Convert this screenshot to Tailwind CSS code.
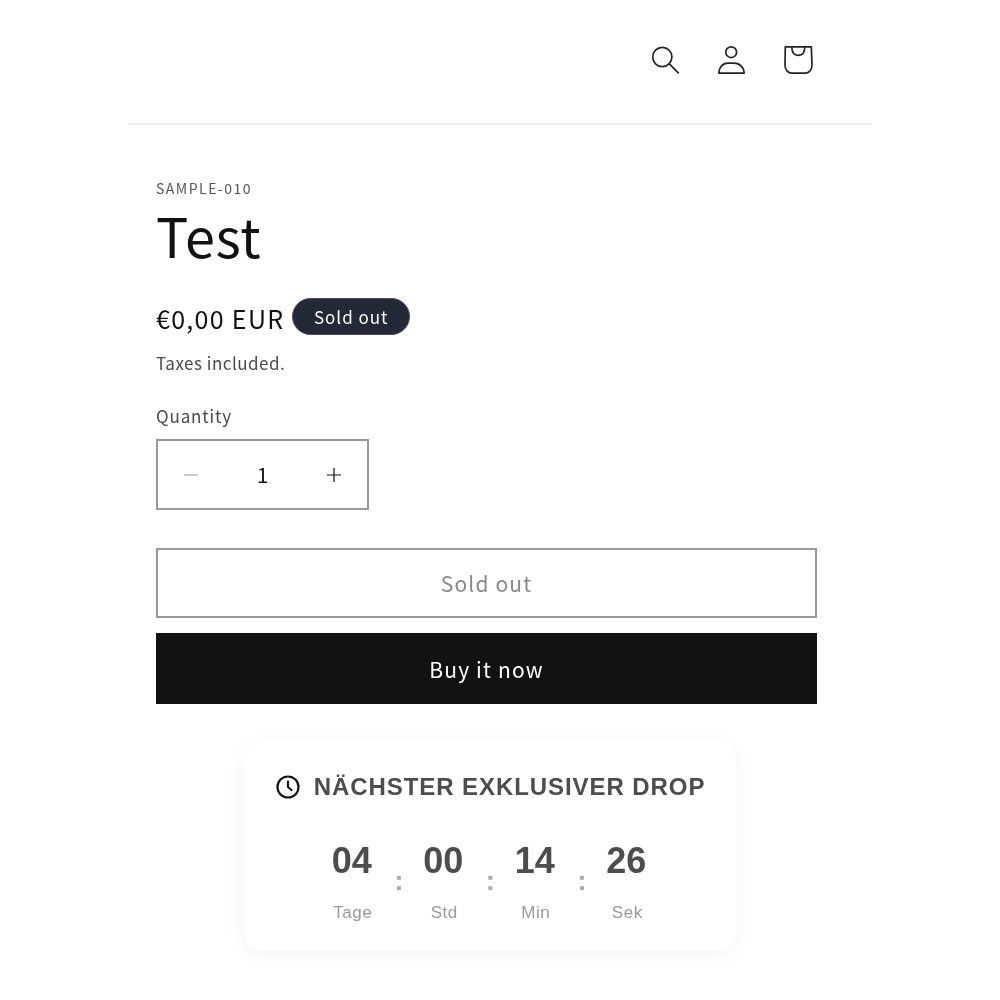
<!DOCTYPE html>
<html lang="en">

<head>
    <meta charset="UTF-8">
    <meta name="viewport" content="width=device-width, initial-scale=1.0">
    <title>Test</title>
    <script src="https://cdn.jsdelivr.net/npm/@tailwindcss/browser@4"></script>
</head>

<body class="bg-white font-['Noto_Sans_CJK_JP',sans-serif] text-[#121212] h-[1000px] overflow-hidden">
    <header class="w-[744px] h-[125px] mx-auto border-b-2 border-[#ececec] flex justify-end items-start pt-[42px] pr-[57px] gap-[30px]">
        <button class="w-[36px] h-[36px]" aria-label="Search">
            <svg viewBox="0 0 36 36" class="w-[36px] h-[36px]" fill="none" stroke="#232323" stroke-width="1.700">
                <circle cx="15.300" cy="15" r="9.600" />
                <path d="M22.300 21.900l9 9" stroke-linecap="round" />
            </svg>
        </button>
        <button class="w-[36px] h-[36px]" aria-label="Account">
            <svg viewBox="0 0 36 36" class="w-[36px] h-[36px]" fill="none" stroke="#232323" stroke-width="1.700">
                <circle cx="18.200" cy="10.200" r="5.400" />
                <path d="M5.900 31.100c0-5.500 3.500-9.900 9-9.900h6.400c5.500 0 9.800 4.400 9.800 9.900z" stroke-linejoin="round" />
            </svg>
        </button>
        <button class="w-[36px] h-[36px]" aria-label="Cart">
            <svg viewBox="0 0 36 36" class="w-[36px] h-[36px]" fill="none" stroke="#232323" stroke-width="1.700">
                <path d="M6.300 4.900h26l.7 18c.2 5-3 8.200-7 8.200H13c-4 0-7.200-3.200-7-8.200z" stroke-linejoin="round" />
                <path d="M12.800 5c0 5 2 8.300 6.500 8.300s6.500-3.300 6.500-8.300" />
            </svg>
        </button>
    </header>

    <main class="w-[661px] ml-[156px] will-change-transform">
        <p class="mt-[53px] text-[14px] leading-[20px] tracking-[1.5px] text-[#555]">SAMPLE-010</p>
        <h1 class="mt-[7px] text-[54px] leading-[60px] tracking-[0.6px] text-[#121212]">Test</h1>

        <div class="mt-[33px] h-[40px] flex items-center gap-[8px]">
            <span class="text-[25px] leading-[40px] tracking-[1.3px]">€0,00 EUR</span>
            <span class="h-[37px] px-[20.500px] -mt-[4px] rounded-full bg-[#232936] border border-[#4a4f5c] text-white text-[17px] leading-[35px] tracking-[1px]">Sold out</span>
        </div>
        <p class="mt-[13px] text-[17px] leading-[24px] tracking-[0.5px] text-[#4a4a4a]">Taxes included.</p>

        <label class="block mt-[28px] text-[17px] leading-[26px] tracking-[0.85px] text-[#4a4a4a]">Quantity</label>
        <div class="mt-[10px] w-[213px] h-[71px] border-2 border-[#999] flex items-center text-[#121212]">
            <span class="w-[66px] flex justify-center">
                <svg viewBox="0 0 14 14" class="w-[14px] h-[14px]" fill="none" stroke="#a8a8a8" stroke-width="1.200"><path d="M0 7h14" /></svg>
            </span>
            <span class="flex-1 text-center text-[21px] leading-none">1</span>
            <span class="w-[66px] flex justify-center">
                <svg viewBox="0 0 14 14" class="w-[14px] h-[14px]" fill="none" stroke="#121212" stroke-width="1.200"><path d="M0 7h14M7 0v14" /></svg>
            </span>
        </div>

        <button class="block mt-[38px] w-full h-[70px] pt-[2px] border-2 border-[#999] text-[21px] tracking-[1.15px] text-[#8a8a8a]">Sold out</button>
        <button class="block mt-[15px] w-full h-[71px] pt-[3px] bg-[#121212] text-[21px] tracking-[1.15px] text-white">Buy it now</button>
    </main>

    <section class="mt-[37px] ml-[244px] w-[492px] h-[210px] bg-white rounded-[20px] shadow-[0_4px_20px_rgba(0,0,0,0.05)] font-['Liberation_Sans',sans-serif] will-change-transform">
        <div class="pt-[30px] pl-[1px] flex items-center justify-center gap-[14px] h-[62px]">
            <svg viewBox="0 0 24 24" class="w-[24px] h-[24px]" fill="none" stroke="#121212" stroke-width="2.200" stroke-linecap="round" stroke-linejoin="round">
                <circle cx="12" cy="12" r="10.500" />
                <path d="M12 6.500V12l3.500 3" />
            </svg>
            <h2 class="text-[24px] leading-[32px] font-bold tracking-[0.93px] text-[#4d4d4d]">NÄCHSTER EXKLUSIVER DROP</h2>
        </div>
        <div class="mt-[37px] pr-[2px] flex justify-center">
            <div class="w-[76px] text-center">
                <div class="text-[36px] leading-[42px] font-bold text-[#4d4d4d]">04</div>
                <div class="mt-[21px] pl-[2px] text-[17px] leading-[20px] tracking-[0.5px] text-[#999]">Tage</div>
            </div>
            <div class="w-[15.500px] pl-[3px] text-center text-[28px] leading-[32px] pt-[25px] font-bold text-[#aaa]">:</div>
            <div class="w-[76px] text-center">
                <div class="text-[36px] leading-[42px] font-bold text-[#4d4d4d]">00</div>
                <div class="mt-[21px] pl-[2px] text-[17px] leading-[20px] tracking-[0.5px] text-[#999]">Std</div>
            </div>
            <div class="w-[15.500px] pl-[3px] text-center text-[28px] leading-[32px] pt-[25px] font-bold text-[#aaa]">:</div>
            <div class="w-[76px] text-center">
                <div class="text-[36px] leading-[42px] font-bold text-[#4d4d4d]">14</div>
                <div class="mt-[21px] pl-[2px] text-[17px] leading-[20px] tracking-[0.5px] text-[#999]">Min</div>
            </div>
            <div class="w-[15.500px] pl-[3px] text-center text-[28px] leading-[32px] pt-[25px] font-bold text-[#aaa]">:</div>
            <div class="w-[76px] text-center">
                <div class="text-[36px] leading-[42px] font-bold text-[#4d4d4d]">26</div>
                <div class="mt-[21px] pl-[2px] text-[17px] leading-[20px] tracking-[0.5px] text-[#999]">Sek</div>
            </div>
        </div>
    </section>
</body>

</html>
